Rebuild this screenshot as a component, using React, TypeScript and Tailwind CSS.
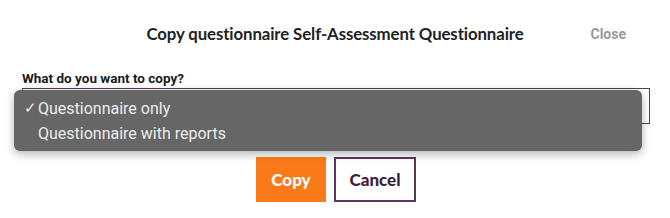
import React from "react";

export default function App() {
  return (
    <div className="relative w-[670px] h-[218px] bg-white overflow-hidden">
      <div className="grid grid-cols-[1fr_auto_1fr] items-center h-[68px]">
        <div />
        <h1 className="text-[16.8px] font-bold text-[#222] tracking-[-0.1px]" style={{ fontFamily: "Lato, 'Noto Sans', sans-serif" }}>
          Copy questionnaire Self-Assessment Questionnaire
        </h1>
        <div className="flex justify-end pr-[44px]">
          <button className="text-[14px] font-bold text-[#9a9a9a]" style={{ fontFamily: "Roboto, 'Noto Sans', sans-serif" }}>
            Close
          </button>
        </div>
      </div>
      <div className="px-[22px] pr-[20px]">
        <label className="block text-[13.5px] font-bold text-[#1a1a1a] leading-[18px] mt-[1px]" style={{ fontFamily: "Roboto, 'Noto Sans', sans-serif" }}>
          What do you want to copy?
        </label>
        <div className="h-[36px] border border-[#5b3b5b] mt-[1px]" />
        <div className="flex justify-center gap-[8px] mt-[33px]" style={{ fontFamily: "Lato, 'Noto Sans', sans-serif" }}>
          <button className="w-[70px] h-[45px] bg-[#fa7a1a] text-white text-[17px] font-black">Copy</button>
          <button className="w-[82px] h-[45px] bg-white border-2 border-[#5a3a58] text-[#3e1f3c] text-[17px] font-black">Cancel</button>
        </div>
      </div>
      <div
        className="absolute left-[14px] top-[90px] w-[628px] h-[61px] rounded-[6px] bg-[#666666] shadow-[0_3px_10px_rgba(0,0,0,0.3)] flex flex-col justify-center text-[16px] text-[#ececec]"
        style={{ fontFamily: "Roboto, 'Liberation Sans', sans-serif" }}
      >
        <div className="flex items-center h-[25px] pl-[10px] mt-[1px]">
          <span className="w-[14px] text-[15px]">✓</span>
          <span>Questionnaire only</span>
        </div>
        <div className="flex items-center h-[25px] pl-[24px]">
          <span>Questionnaire with reports</span>
        </div>
      </div>
    </div>
  );
}
